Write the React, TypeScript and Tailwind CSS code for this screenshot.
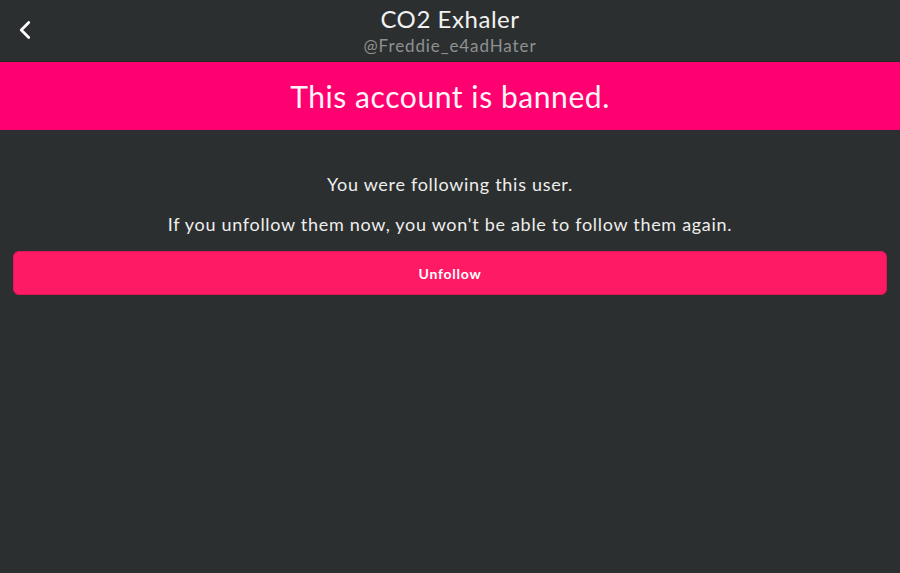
import { ChevronLeft } from "lucide-react";

export default function App() {
  return (
    <div
      className="min-h-[573px] w-full bg-[#2c2f2f] text-white"
      style={{ fontFamily: "Lato, 'Noto Sans', sans-serif" }}
    >
      <header className="relative flex h-[62px] flex-col items-center border-b border-[#232a28] pt-[3px]">
        <button className="absolute left-[10px] top-[15px] text-white">
          <ChevronLeft className="h-[30px] w-[30px]" strokeWidth={2.2} />
        </button>
        <h1 className="text-[24px] leading-[32px] tracking-[0.55px] text-[#f2f2f2]">CO2 Exhaler</h1>
        <p className="text-[17px] leading-[22px] tracking-[0.9px] text-[#8f9191]">@Freddie_e4adHater</p>
      </header>

      <div className="flex h-[68px] items-center justify-center bg-[#ff0070]">
        <span className="text-[30px] tracking-[0.57px] text-[#fff5f9]">This account is banned.</span>
      </div>

      <div className="flex flex-col items-center px-[13px] pt-[42px]">
        <p className="text-[18px] leading-[24px] tracking-[0.7px] text-[#eeeeee]">You were following this user.</p>
        <p className="mt-[16px] text-[18px] leading-[24px] tracking-[0.7px] text-[#eeeeee]">
          If you unfollow them now, you won't be able to follow them again.
        </p>
        <button className="mt-[15px] h-[44px] w-full rounded-[6px] border border-[#e0185a] bg-[#ff1a66] text-[14px] font-bold tracking-[0.75px] text-white">
          Unfollow
        </button>
      </div>
    </div>
  );
}
